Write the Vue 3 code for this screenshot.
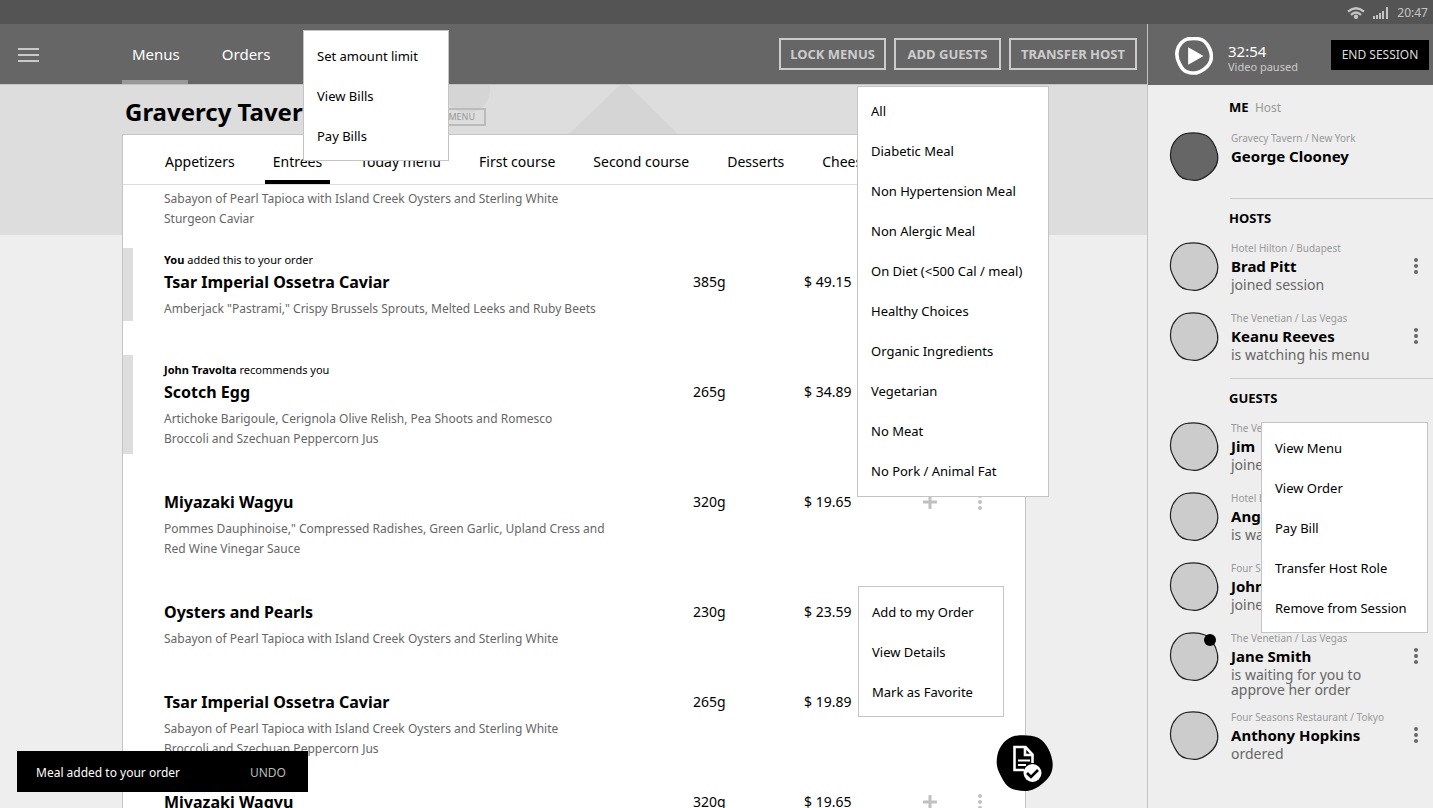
<script setup>
const categories = ['Appetizers', 'Entrees', 'Today menu', 'First course', 'Second course', 'Desserts', 'Cheese']

const dishes = [
  { desc: 'Sabayon of Pearl Tapioca with Island Creek Oysters and Sterling White\nSturgeon Caviar', kind: 'scrolled' },
  { who: 'You', note: 'added this to your order', kind: 'added', name: 'Tsar Imperial Ossetra Caviar', weight: '385g', price: '$ 49.15', desc: 'Amberjack "Pastrami," Crispy Brussels Sprouts, Melted Leeks and Ruby Beets' },
  { who: 'John Travolta', note: 'recommends you', kind: 'recommended', name: 'Scotch Egg', weight: '265g', price: '$ 34.89', desc: 'Artichoke Barigoule, Cerignola Olive Relish, Pea Shoots and Romesco\nBroccoli and Szechuan Peppercorn Jus' },
  { name: 'Miyazaki Wagyu', weight: '320g', price: '$ 19.65', desc: 'Pommes Dauphinoise," Compressed Radishes, Green Garlic, Upland Cress and\nRed Wine Vinegar Sauce' },
  { name: 'Oysters and Pearls', weight: '230g', price: '$ 23.59', desc: 'Sabayon of Pearl Tapioca with Island Creek Oysters and Sterling White' },
  { name: 'Tsar Imperial Ossetra Caviar', kind: 'tight', weight: '265g', price: '$ 19.89', desc: 'Sabayon of Pearl Tapioca with Island Creek Oysters and Sterling White\nBroccoli and Szechuan Peppercorn Jus' },
  { name: 'Miyazaki Wagyu', weight: '320g', price: '$ 19.65', desc: '' }
]

const groups = [
  { title: 'ME', role: 'Host', people: [{ place: 'Gravecy Tavern / New York', name: 'George Clooney', me: true }] },
  {
    title: 'HOSTS',
    people: [
      { place: 'Hotel Hilton / Budapest', name: 'Brad Pitt', status: 'joined session' },
      { place: 'The Venetian / Las Vegas', name: 'Keanu Reeves', status: 'is watching his menu' }
    ]
  },
  {
    title: 'GUESTS',
    people: [
      { place: 'The Venetian', name: 'Jim', status: 'joined' },
      { place: 'Hotel Hilton', name: 'Angelina', status: 'is watching' },
      { place: 'Four Seasons', name: 'John', status: 'joined' },
      { place: 'The Venetian / Las Vegas', name: 'Jane Smith', status: 'is waiting for you to\napprove her order', alert: true },
      { place: 'Four Seasons Restaurant / Tokyo', name: 'Anthony Hopkins', status: 'ordered' }
    ]
  }
]

const popups = [
  { id: 'bills', label: 'Bills', items: ['Set amount limit', 'View Bills', 'Pay Bills'] },
  { id: 'filter', label: 'Meal filter', items: ['All', 'Diabetic Meal', 'Non Hypertension Meal', 'Non Alergic Meal', 'On Diet (<500 Cal / meal)', 'Healthy Choices', 'Organic Ingredients', 'Vegetarian', 'No Meat', 'No Pork / Animal Fat'] },
  { id: 'dish-menu', label: 'Dish actions', items: ['Add to my Order', 'View Details', 'Mark as Favorite'] },
  { id: 'guest-menu', label: 'Guest actions', items: ['View Menu', 'View Order', 'Pay Bill', 'Transfer Host Role', 'Remove from Session'] }
]

const blob = 'M17 1.5C24 .5 31 1 36 3S47 13 48.500 22 47 37 39 43 26 49 18 47.5 8 41 5 35.500 .5 26 2 18 10 3 17 1.5Z'
</script>

<template>
  <div class="app">
    <div class="status">
      <svg width="18" height="12" viewBox="0 0 18 12" aria-hidden="true">
        <g fill="none" stroke="#c4c4c4" stroke-width="2.4">
          <path d="M1 4.6Q9-2 17 4.6" />
          <path d="M4 7.8Q9 3.400 14 7.8" />
        </g>
        <circle cx="9" cy="9.8" r="2.2" fill="#c4c4c4" />
      </svg>
      <svg width="16" height="12" viewBox="0 0 16 12" aria-hidden="true">
        <path d="M0 9h2v3H0zM3 8h2v4H3zM6 6h2v6H6zM9 4h2v8H9zM13 0h2v12h-2z" fill="#c4c4c4" />
      </svg>
      <span>20:47</span>
    </div>

    <div class="columns">
      <div class="main">
        <header class="topbar">
          <button class="burger" aria-label="Open navigation">
            <svg width="21" height="16" viewBox="0 0 21 16"><path d="M0 2h21M0 8h21M0 14h21" stroke="#c9c9c9" stroke-width="2" /></svg>
          </button>
          <nav class="sections">
            <a href="#" class="section current">Menus</a>
            <a href="#" class="section">Orders</a>
          </nav>
          <div class="host-actions">
            <button>LOCK MENUS</button>
            <button>ADD GUESTS</button>
            <button>TRANSFER HOST</button>
          </div>
        </header>

        <div class="hero">
          <svg class="hero-art" width="240" height="49" viewBox="0 0 240 49" aria-hidden="true">
            <circle cx="27" cy="5" r="23" />
            <path d="M129 49 180 0h8l50 49z" />
          </svg>
          <h1>Gravercy Tavern</h1>
          <button class="menu-button">MENU</button>
        </div>

        <main class="card">
          <nav class="tabs">
            <a v-for="c in categories" :key="c" href="#" class="tab" :class="{ active: c === 'Entrees' }">{{ c }}</a>
          </nav>
          <div class="dishes">
            <article v-for="(d, i) in dishes" :key="i" class="dish" :class="d.kind">
              <p v-if="d.who" class="note"><b>{{ d.who }}</b> {{ d.note }}</p>
              <div v-if="d.name" class="line">
                <h2>{{ d.name }}</h2>
                <span>{{ d.weight }}</span>
                <span>{{ d.price }}</span>
                <div class="dish-actions">
                  <button aria-label="Add dish">
                    <svg width="14" height="14" viewBox="0 0 14 14"><path d="M7 1v12M1 7h12" stroke="#c0c0c0" stroke-width="3" stroke-linecap="round" /></svg>
                  </button>
                  <button aria-label="More dish actions">
                    <svg width="4" height="16" viewBox="0 0 4 16" fill="#c0c0c0"><circle cx="2" cy="2" r="2" /><circle cx="2" cy="8" r="2" /><circle cx="2" cy="14" r="2" /></svg>
                  </button>
                </div>
              </div>
              <p class="desc">{{ d.desc }}</p>
            </article>
          </div>
        </main>
      </div>

      <aside class="side">
        <div class="session">
          <button class="play" aria-label="Play video">
            <svg width="38" height="38" viewBox="-1 -1 52 52">
              <path :d="blob" fill="none" stroke="#fff" stroke-width="5" />
              <path d="M17 13v24l21-12z" fill="#fff" />
            </svg>
          </button>
          <div class="timer">
            <strong>32:54</strong>
            <span>Video paused</span>
          </div>
          <button class="end">END SESSION</button>
        </div>

        <section v-for="g in groups" :key="g.title" class="group">
          <h3>{{ g.title }} <small v-if="g.role">{{ g.role }}</small></h3>
          <div v-for="p in g.people" :key="p.name" class="person">
            <div class="avatar">
              <svg width="48" height="48" viewBox="1 1 48 48" :class="{ me: p.me }" aria-hidden="true">
                <path :d="blob" />
              </svg>
              <i v-if="p.alert" class="alert"></i>
            </div>
            <div class="who">
              <span class="place">{{ p.place }}</span>
              <strong>{{ p.name }}</strong>
              <span class="state">{{ p.status }}</span>
            </div>
            <button v-if="!p.me" class="kebab" :aria-label="'Actions for ' + p.name">
              <svg width="4" height="16" viewBox="0 0 4 16" fill="#666"><circle cx="2" cy="2" r="2" /><circle cx="2" cy="8" r="2" /><circle cx="2" cy="14" r="2" /></svg>
            </button>
          </div>
        </section>
      </aside>
    </div>

    <div v-for="m in popups" :key="m.id" class="popup" :class="m.id" role="menu" :aria-label="m.label">
      <button v-for="item in m.items" :key="item" role="menuitem">{{ item }}</button>
    </div>

    <div class="toast" role="status">
      <span>Meal added to your order</span>
      <button>UNDO</button>
    </div>

    <button class="fab" aria-label="Review order">
      <svg width="58" height="58" viewBox="0 0 58 58">
        <path :d="blob" transform="scale(1.18)" fill="#000" />
        <path d="M29 36H19.500V13h11l7 7.500V29M30 13v8h7.500" fill="none" stroke="#fff" stroke-width="2.600" />
        <path d="M23 26.500h12M23 31h8" stroke="#fff" stroke-width="2" />
        <circle cx="37.500" cy="39" r="9" fill="#fff" />
        <path d="M32 39l4 4 7-7" fill="none" stroke="#000" stroke-width="2.600" />
      </svg>
    </button>
  </div>
</template>

<style>
body { background: #eee; }
</style>

<style scoped>
.app {
  position: relative;
  display: flex;
  flex-direction: column;
  height: 100vh;
  overflow: hidden;
  background: #eee;
  color: #000;
  font-family: "Noto Sans", "Open Sans", sans-serif;
  font-size: 14px;
  line-height: 20px;
}
button {
  border: 0;
  padding: 0;
  background: none;
  color: inherit;
  font: inherit;
  cursor: pointer;
}
a { color: inherit; text-decoration: none; }
h1, h2, h3, p { margin: 0; }
svg { display: block; }

.status {
  display: flex;
  flex: none;
  align-items: center;
  justify-content: flex-end;
  gap: 8px;
  box-sizing: border-box;
  height: 24px;
  padding: 1px 5px 0 0;
  background: #545454;
  color: #c4c4c4;
  font-size: 12px;
}
.columns {
  display: grid;
  flex: 1;
  grid-template-columns: minmax(0, 1fr) 286px;
  min-height: 0;
}
.main {
  display: flex;
  flex-direction: column;
  min-height: 0;
  background: linear-gradient(#ddd 211px, #eee 211px);
}
.topbar {
  display: flex;
  flex: none;
  align-items: center;
  box-sizing: border-box;
  height: 61px;
  padding: 0 10px 0 18px;
  background: #666;
  border-bottom: 1px solid #c4c4c4;
}
.burger { width: 104px; padding-top: 2px; }
.sections { display: flex; gap: 24px; height: 60px; }
.section {
  display: flex;
  align-items: center;
  box-sizing: border-box;
  padding: 4px 8px 0 10px;
  border-bottom: 4px solid transparent;
  color: #fff;
  font-size: 15px;
}
.section.current { border-bottom-color: #999; }
.host-actions { display: flex; gap: 8px; margin-left: auto; }
.host-actions button {
  min-width: 107px;
  height: 32px;
  padding: 0 9px;
  border: 2px solid #ccc;
  color: #ccc;
  font-size: 13px;
  font-weight: 700;
}
.host-actions button:last-child { min-width: 128px; }

.hero {
  position: relative;
  display: flex;
  flex: none;
  align-items: center;
  height: 49px;
  padding: 0 122px 0 125px;
}
.hero-art { position: absolute; left: 440px; top: 0; fill: #d5d5d5; }
h1 {
  position: relative;
  width: 280px;
  padding-top: 4px;
  font-size: 24px;
  line-height: 32px;
}
.menu-button {
  position: relative;
  width: 81px;
  height: 18px;
  margin-top: 14px;
  padding-right: 9px;
  border: 2px solid #bbb;
  color: #999;
  font-size: 9px;
  line-height: 12px;
  text-align: right;
}

.card {
  display: flex;
  flex: 1;
  flex-direction: column;
  min-height: 0;
  margin: 0 121px 0 122px;
  border: 1px solid #c4c4c4;
  border-bottom: 0;
  background: #fff;
}
.tabs {
  display: flex;
  flex: none;
  gap: 22px;
  box-sizing: border-box;
  height: 50px;
  padding-left: 34px;
  border-bottom: 1px solid #ddd;
}
.tab {
  padding: 17px 8px 9px;
  border-bottom: 4px solid transparent;
  white-space: nowrap;
}
.tab.active { border-bottom-color: #000; }

.dishes {
  display: flex;
  flex: 1;
  flex-direction: column;
  gap: 41px;
  min-height: 0;
  padding-top: 4px;
  overflow: hidden;
}
.dish { flex: none; padding-left: 41px; }
.dish.scrolled { margin-bottom: -20px; }
.dish.tight { margin-bottom: -10px; }
.dish.added, .dish.recommended {
  padding-left: 31px;
  border-left: 10px solid #ddd;
}
.dish.added { padding-block: 2px; margin-block: -2px; }
.dish.recommended { padding-block: 5px; margin-block: -5px; }
.note { font-size: 11px; }
.line {
  display: grid;
  grid-template-columns: minmax(0, 1fr) 111px 101px 120px;
  align-items: center;
  height: 24px;
}
h2 { font-size: 16px; line-height: 24px; }
.dish-actions { display: flex; }
.dish-actions button {
  display: grid;
  place-items: center;
  width: 50px;
  height: 24px;
}
.desc {
  margin-top: 5px;
  color: #666;
  font-size: 12px;
  white-space: pre-line;
}
.dish.scrolled .desc { margin-top: 0; }

.side {
  border-left: 1px solid #c4c4c4;
  background: #eee;
}
.session {
  display: flex;
  align-items: center;
  height: 61px;
  padding: 0 4px 0 27px;
  background: #666;
}
.play { width: 53px; padding-top: 2px; }
.timer {
  display: flex;
  flex-direction: column;
  padding-top: 6px;
  color: #ccc;
  font-size: 11px;
  line-height: 13px;
}
.timer strong {
  color: #fff;
  font-size: 15px;
  font-weight: 400;
  line-height: 17px;
}
.end {
  width: 98px;
  height: 30px;
  margin-left: auto;
  background: #000;
  color: #ddd;
  font-size: 12px;
}

.group { padding: 12px 0 5px 22px; }
.group + .group { padding-top: 10px; }
.group + .group::before {
  display: block;
  height: 1px;
  margin: -10px 0 9px 60px;
  background: #c9c9c9;
  content: "";
}
h3 {
  margin: 0 0 15px 59px;
  font-size: 13px;
  line-height: 20px;
}
h3 small {
  margin-left: 3px;
  color: #999;
  font-size: 12px;
  font-weight: 400;
}
.avatar svg { overflow: visible; }
.person {
  display: flex;
  box-sizing: border-box;
  min-height: 60px;
  padding-bottom: 5px;
}
.person + .person { margin-top: 10px; }
.avatar { position: relative; width: 61px; }
.avatar svg { fill: #ccc; stroke: #222; stroke-width: 1.2px; }
.avatar svg.me { fill: #666; }
.alert {
  position: absolute;
  top: 1px;
  left: 34px;
  width: 12px;
  height: 12px;
  border-radius: 50%;
  background: #000;
}
.who { display: flex; flex: 1; flex-direction: column; margin-top: -1px; }
.place { color: #999; font-size: 10px; line-height: 13px; }
.who strong { font-size: 15px; line-height: 22px; }
.state { color: #666; line-height: 15px; white-space: pre-line; }
.kebab {
  display: grid;
  place-items: center;
  width: 24px;
  height: 24px;
  margin: 11px 5px 0 0;
}

.popup {
  position: absolute;
  display: flex;
  flex-direction: column;
  box-sizing: border-box;
  padding: 5px 0 4px;
  border: 1px solid #c4c4c4;
  background: #fff;
}
.popup button {
  height: 40px;
  padding-left: 13px;
  font-size: 13px;
  text-align: left;
}
.bills { left: 303px; top: 30px; width: 146px; }
.filter { right: 384px; top: 86px; width: 192px; padding: 4px 0 5px; }
.dish-menu { right: 429px; top: 586px; width: 146px; }
.guest-menu { right: 5px; top: 422px; width: 167px; }

.toast {
  position: absolute;
  left: 17px;
  bottom: 16px;
  display: flex;
  align-items: center;
  justify-content: space-between;
  box-sizing: border-box;
  width: 291px;
  height: 41px;
  padding: 2px 22px 0 19px;
  background: #000;
  color: #fff;
  font-size: 12px;
}
.toast button { color: #bbb; font-size: 12px; }
.fab { position: absolute; right: 380px; bottom: 16px; }
</style>
